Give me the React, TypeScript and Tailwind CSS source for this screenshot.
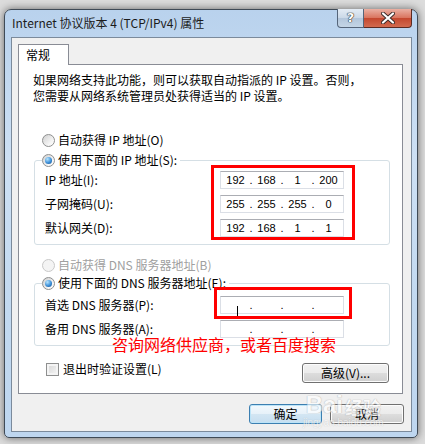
import React from "react";

const cjk = "font-['Noto_Sans_CJK_SC','Noto_Sans',sans-serif]";

function Radio({ checked, disabled }: { checked?: boolean; disabled?: boolean }) {
  return (
    <span
      className={`flex h-[13px] w-[13px] shrink-0 items-center justify-center rounded-full border ${
        disabled
          ? "border-[#c9c9c9] bg-[#f4f4f4]"
          : "border-[#8e8f8f] bg-[linear-gradient(135deg,#d0d0d0,#f6f6f6_70%,#ffffff)]"
      }`}
    >
      {checked && (
        <span className="h-[7px] w-[7px] rounded-full bg-[radial-gradient(circle_at_35%_30%,#b8e6ff,#3c8fd8_55%,#0d4a8a)]" />
      )}
    </span>
  );
}

function IpField({ values, caret }: { values: string[]; caret?: boolean }) {
  return (
    <div className="flex h-[18px] w-[124px] items-center border border-[#dbdfe6] border-t-[#abadb3] bg-white pl-[1px] font-['Liberation_Sans',sans-serif] text-[11px] text-black">
      {values.map((v, i) => (
        <React.Fragment key={i}>
          {i > 0 && <span className="w-[4px] text-center leading-[14px]">.</span>}
          <span className="relative flex w-[27px] justify-center leading-[14px]">
            {v}
            {caret && i === 0 && <span className="absolute left-[15px] top-[1px] h-[12px] w-[1px] bg-black" />}
          </span>
        </React.Fragment>
      ))}
    </div>
  );
}

function Btn({ children, primary, w }: { children: React.ReactNode; primary?: boolean; w: string }) {
  return (
    <div
      className={`flex h-[20px] items-center justify-center rounded-[3px] border text-[12px] text-black ${w} ${
        primary
          ? "border-[#3c7fb1] bg-[linear-gradient(to_bottom,#f3f9fd_0%,#e6f1f9_50%,#d3e6f3_50%,#c6def0_100%)] shadow-[inset_0_0_0_1px_#bce4f8]"
          : "border-[#707070] bg-[linear-gradient(to_bottom,#f2f2f2_0%,#ebebeb_50%,#dddddd_50%,#cfcfcf_100%)] shadow-[inset_0_0_0_1px_#fcfcfc]"
      }`}
    >
      {children}
    </div>
  );
}

export default function App() {
  const ipRows = [
    { label: "IP 地址(I):", values: ["192", "168", "1", "200"] },
    { label: "子网掩码(U):", values: ["255", "255", "255", "0"] },
    { label: "默认网关(D):", values: ["192", "168", "1", "1"] },
  ];

  return (
    <div className={`relative h-[444px] w-[425px] overflow-hidden bg-[#dcdcdc] pl-[4px] pt-[9px] ${cjk}`}>
      {/* Window */}
      <div className="flex h-[429px] w-[414px] flex-col rounded-t-[7px] rounded-b-[5px] border border-[#3f4a56] bg-[linear-gradient(to_bottom,#b9d2ed,#cde0f4_35%,#c2d9f0_70%,#bed6ef)] pb-[5px] pl-[6px] pr-[5px] shadow-[0_0_9px_rgba(0,0,0,0.55)]">
        {/* Title bar */}
        <div className="flex h-[27px] items-start justify-between">
          <span className="ml-[1px] mt-[5px] text-[12px] leading-[16px] text-[#1b1b1b]">
            Internet 协议版本 4 (TCP/IPv4) 属性
          </span>
          <div className="-mt-px flex">
            <div className="flex h-[19px] w-[27px] items-center justify-center rounded-bl-[4px] border border-t-0 border-[#55657a] bg-[linear-gradient(to_bottom,#e4ecf5,#cad8e7_50%,#b3c6db_51%,#c4d5e6)] font-['DejaVu_Sans',sans-serif] text-[13px] font-bold text-white [text-shadow:0_0_1px_#2a2a2a,0_0_1px_#2a2a2a,0_0_1px_#2a2a2a]">
              ?
            </div>
            <div className="flex h-[19px] w-[48px] items-center justify-center rounded-br-[4px] border border-l-0 border-t-0 border-[#5b2a22] bg-[linear-gradient(to_bottom,#eab0a3,#d9735d_50%,#c4472e_51%,#d26a4f)]">
              <svg width="14" height="12" viewBox="0 0 14 12">
                <path d="M2 1.5 L12 10.5 M12 1.5 L2 10.5" stroke="#3a2a28" strokeWidth="4" strokeLinecap="round" />
                <path d="M2 1.5 L12 10.5 M12 1.5 L2 10.5" stroke="#ffffff" strokeWidth="2.2" strokeLinecap="round" />
              </svg>
            </div>
          </div>
        </div>

        {/* Client area */}
        <div className="flex flex-1 flex-col border border-[#7b8a9b] bg-[#f0f0f0] px-[6px] pt-[6px]">
          {/* Tab header */}
          <div className="flex">
            <div className="relative z-10 -mb-px flex h-[21px] w-[51px] items-center border border-b-0 border-[#898c95] bg-white pl-[7px] text-[12px] text-black">
              常规
            </div>
          </div>

          {/* Tab panel */}
          <div className="flex h-[330px] w-[385px] flex-col border border-[#898c95] bg-white text-[12px] leading-[16px] text-black">
            <div className="pl-[14px] pt-[7px]">
              <div>如果网络支持此功能，则可以获取自动指派的 IP 设置。否则，</div>
              <div>您需要从网络系统管理员处获得适当的 IP 设置。</div>
            </div>

            <div className="ml-[23px] mt-[28px] flex h-[16px] items-center gap-[3px]">
              <Radio />
              <span>自动获得 IP 地址(O)</span>
            </div>

            {/* IP group */}
            <div className="relative ml-[15px] mt-[12px] w-[356px] rounded-[3px] border border-[#d5dfe5] pb-[7px]">
              <div className="-mt-[9px] ml-[7px] flex h-[16px] w-fit items-center gap-[3px] bg-white pr-[3px]">
                <Radio checked />
                <span>使用下面的 IP 地址(S):</span>
              </div>
              <div className="mt-[3px] flex flex-col gap-[6px]">
                {ipRows.map((r) => (
                  <div key={r.label} className="flex h-[18px] items-center">
                    <span className="w-[185px] pl-[10px]">{r.label}</span>
                    <IpField values={r.values} />
                  </div>
                ))}
              </div>
              <div className="absolute left-[176px] top-[4px] h-[75px] w-[144px] border-[3px] border-[#ff0000]" />
            </div>

            <div className="ml-[23px] mt-[12px] flex h-[16px] items-center gap-[3px] text-[#a0a0a0]">
              <Radio disabled />
              <span>自动获得 DNS 服务器地址(B)</span>
            </div>

            {/* DNS group */}
            <div className="relative ml-[15px] mt-[10px] w-[356px] rounded-[3px] border border-[#d5dfe5] pb-[7px]">
              <div className="-mt-[9px] ml-[7px] flex h-[16px] w-fit items-center gap-[3px] bg-white pr-[3px]">
                <Radio checked />
                <span>使用下面的 DNS 服务器地址(E):</span>
              </div>
              <div className="mt-[5px] flex flex-col gap-[6px]">
                <div className="flex h-[18px] items-center">
                  <span className="w-[185px] pl-[10px]">首选 DNS 服务器(P):</span>
                  <IpField values={["", "", "", ""]} caret />
                </div>
                <div className="flex h-[18px] items-center">
                  <span className="w-[185px] pl-[10px]">备用 DNS 服务器(A):</span>
                  <IpField values={["", "", "", ""]} />
                </div>
              </div>
              <div className="absolute left-[179px] top-[3px] h-[32px] w-[138px] border-[3px] border-[#ff0000]" />
              <div className="absolute left-[77px] top-[52px] whitespace-nowrap text-[16px] leading-[16px] text-[#ff0000]">
                咨询网络供应商，或者百度搜索
              </div>
            </div>

            {/* Validate + advanced */}
            <div className="mt-[15px] flex items-start justify-between pl-[27px] pr-[13px]">
              <div className="flex h-[16px] items-center gap-[4px]">
                <span className="h-[13px] w-[13px] border border-[#8e8f8f] bg-[linear-gradient(135deg,#d4d4d4,#f8f8f8)] shadow-[inset_0_0_0_2px_#f4f4f4]" />
                <span>退出时验证设置(L)</span>
              </div>
              <div className="mt-[2px]">
                <Btn w="w-[87px]">高级(V)...</Btn>
              </div>
            </div>
          </div>

          {/* Dialog buttons */}
          <div className="mt-[10px] flex justify-end gap-[8px] pr-[1px]">
            <Btn primary w="w-[73px]">确定</Btn>
            <Btn w="w-[74px]">取消</Btn>
          </div>
        </div>
      </div>

      {/* Watermark */}
      <div className="pointer-events-none absolute left-[303px] top-[392px] flex flex-col items-center opacity-60">
        <div className="flex items-end gap-[2px] font-['Liberation_Sans',sans-serif] text-[24px] font-bold leading-[26px] text-white [text-shadow:0_0_1px_#9a9a9a,0_0_1px_#9a9a9a]">
          <span>Bai</span>
          <span className={`${cjk} text-[18px] leading-[22px]`}>经验</span>
        </div>
        <span className="font-['Liberation_Sans',sans-serif] text-[10px] leading-[10px] text-white [text-shadow:0_0_1px_#9a9a9a]">
          jingyan.baidu.com
        </span>
      </div>
    </div>
  );
}
